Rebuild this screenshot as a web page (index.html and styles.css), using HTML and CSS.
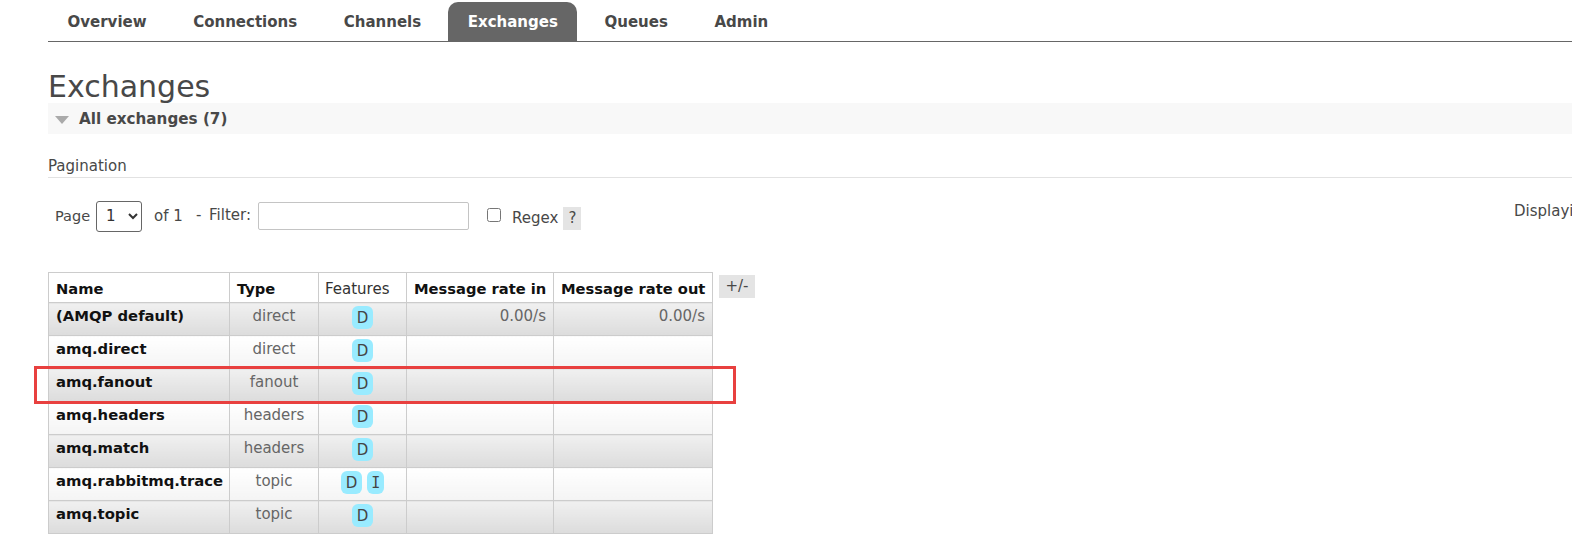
FILE: index.html
```html
<!DOCTYPE html>
<html lang="en">
  <head>
    <meta charset="UTF-8" />
    <title>Exchanges</title>
    <link rel="stylesheet" href="styles.css">
  </head>
  <body>
    <div class="page">
      <ul class="tabs">
        <li><a href="#">Overview</a></li>
        <li><a href="#">Connections</a></li>
        <li><a href="#">Channels</a></li>
        <li><a href="#" class="selected">Exchanges</a></li>
        <li><a href="#">Queues</a></li>
        <li><a href="#">Admin</a></li>
      </ul>

      <h1>Exchanges</h1>

      <div class="section-head">
        <span class="arrow"></span>
        <h2>All exchanges (7)</h2>
      </div>

      <h3 class="pagination-title">Pagination</h3>

      <div class="pagination">
        <label class="page-label">Page</label>
        <select class="page-select">
          <option>1</option>
        </select>
        <span class="of">of 1</span>
        <label class="filter-label">- Filter:</label>
        <input type="text" class="filter" />
        <input type="checkbox" class="regex-check" />
        <label class="regex-label">Regex</label>
        <span class="help">?</span>
        <span class="displaying">Displaying 7 items</span>
      </div>

      <div class="table-wrap">
        <table class="list">
          <thead>
            <tr>
              <th class="c-name">Name</th>
              <th class="c-type">Type</th>
              <th class="c-features plain">Features</th>
              <th class="c-in">Message rate in</th>
              <th class="c-out">Message rate out</th>
            </tr>
          </thead>
          <tbody>
            <tr class="alt1">
              <td class="name">(AMQP default)</td>
              <td class="center">direct</td>
              <td class="center"><span class="tag">D</span></td>
              <td class="rate">0.00/s</td>
              <td class="rate">0.00/s</td>
            </tr>
            <tr class="alt2">
              <td class="name">amq.direct</td>
              <td class="center">direct</td>
              <td class="center"><span class="tag">D</span></td>
              <td></td>
              <td></td>
            </tr>
            <tr class="alt1">
              <td class="name">amq.fanout</td>
              <td class="center">fanout</td>
              <td class="center"><span class="tag">D</span></td>
              <td></td>
              <td></td>
            </tr>
            <tr class="alt2">
              <td class="name">amq.headers</td>
              <td class="center">headers</td>
              <td class="center"><span class="tag">D</span></td>
              <td></td>
              <td></td>
            </tr>
            <tr class="alt1">
              <td class="name">amq.match</td>
              <td class="center">headers</td>
              <td class="center"><span class="tag">D</span></td>
              <td></td>
              <td></td>
            </tr>
            <tr class="alt2">
              <td class="name">amq.rabbitmq.trace</td>
              <td class="center">topic</td>
              <td class="center"><span class="tag">D</span> <span class="tag tag-i">I</span></td>
              <td></td>
              <td></td>
            </tr>
            <tr class="alt1">
              <td class="name">amq.topic</td>
              <td class="center">topic</td>
              <td class="center"><span class="tag">D</span></td>
              <td></td>
              <td></td>
            </tr>
          </tbody>
        </table>
        <span class="plus-minus">+/-</span>
        <div class="highlight"></div>
      </div>
    </div>
  </body>
</html>
```

FILE: styles.css
```css
html,
body {
  margin: 0;
  height: 538px;
  overflow: hidden;
  background: white;
}

body {
  font-family: "DejaVu Sans", Verdana, sans-serif;
  font-size: 15px;
  color: #484848;
}

.page {
  margin-left: 48px;
  width: 1524px;
}

.tabs {
  display: flex;
  gap: 7.6px;
  list-style: none;
  margin: 0;
  padding: 2px 0 0;
  height: 39px;
  border-bottom: 1px solid #666;
}

.tabs a {
  display: block;
  height: 39px;
  line-height: 40px;
  padding: 0 19.5px;
  font-size: 15px;
  font-weight: bold;
  color: #484848;
  text-decoration: none;
  box-sizing: border-box;
}

.tabs a.selected {
  background: #666;
  color: white;
  border-radius: 10px 10px 0 0;
}

h1 {
  margin: 28px 0 0;
  height: 33px;
  line-height: 33px;
  font-size: 30px;
  font-weight: normal;
  color: #484848;
}

.section-head {
  display: flex;
  align-items: center;
  height: 31px;
  background: #f8f8f8;
}

.arrow {
  width: 0;
  height: 0;
  margin: 2px 10px 0 7px;
  border-left: 7px solid transparent;
  border-right: 7px solid transparent;
  border-top: 8px solid #aaa;
}

h2 {
  margin: 0;
  font-size: 15.2px;
  font-weight: bold;
  color: #484848;
}

.pagination-title {
  margin: 22px 0 0;
  height: 21px;
  line-height: 20px;
  font-size: 15px;
  font-weight: normal;
  border-bottom: 1px solid #e2e2e2;
}

.pagination {
  display: flex;
  align-items: center;
  height: 32px;
  margin-top: 22px;
  padding-left: 7px;
}

.page-label {
  font-size: 14.5px;
}

.page-select {
  width: 46px;
  height: 31px;
  margin-left: 6px;
  padding-left: 5px;
  font-family: inherit;
  font-size: 15px;
  color: #333;
  background: white;
  border: 1px solid #666;
  border-radius: 3px;
}

.of {
  margin-left: 12px;
}

.filter-label {
  margin: -2px 0 0 13px;
  word-spacing: 3px;
}

.filter {
  width: 211px;
  height: 28px;
  margin-left: 7px;
  padding: 0;
  box-sizing: border-box;
  border: 1px solid #c4c4c4;
  border-radius: 2px;
}

.regex-check {
  width: 14px;
  height: 14px;
  margin: 0 0 3px 18px;
}

.regex-label {
  margin: 4px 0 0 11px;
}

.help {
  margin: 4px 0 0 5px;
  width: 18px;
  height: 23px;
  line-height: 23px;
  text-align: center;
  background: #e4e4e4;
}

.displaying {
  flex: none;
  width: 58px;
  margin: 0 0 10px auto;
  white-space: nowrap;
  overflow: hidden;
}

.table-wrap {
  position: relative;
  display: flex;
  margin-top: 40px;
}

.list {
  border-collapse: collapse;
  table-layout: fixed;
  width: 664px;
  font-size: 15px;
}

.list th,
.list td {
  border: 1px solid #ccc;
  padding: 0 7px;
  box-sizing: border-box;
  height: 33px;
}

.list th {
  height: 30px;
  padding-top: 2px;
  text-align: left;
  font-size: 14.7px;
  color: #111;
  background: white;
  white-space: nowrap;
}

.list th.plain {
  font-weight: normal;
  font-size: 15px;
  color: #333;
  padding-left: 6px;
}

.c-name { width: 181px; }
.c-type { width: 89px; }
.c-features { width: 88px; }
.c-in { width: 147px; }
.c-out { width: 159px; }

.list td {
  vertical-align: top;
  padding-top: 4px;
  color: #666;
}

.list td.name {
  font-size: 14.8px;
  font-weight: bold;
  color: #111;
}

.list td.center {
  text-align: center;
}

.list td.rate {
  text-align: right;
}

.alt1 td {
  background: linear-gradient(#f0f0f0, #dcdcdc);
}

.alt2 td {
  background: linear-gradient(#fff, #f4f4f4);
}

.tag {
  display: inline-block;
  min-width: 7px;
  height: 23px;
  margin-top: -1px;
  line-height: 24px;
  padding: 0 5px;
  font-size: 15px;
  color: #444;
  background: #99ebff;
  border-radius: 6px;
}

.tag-i {
  font-family: "DejaVu Sans Mono", monospace;
  padding: 0 4px;
}

.plus-minus {
  align-self: flex-start;
  margin: 3px 0 0 6px;
  width: 36px;
  height: 23px;
  line-height: 23px;
  text-align: center;
  background: #e4e4e4;
}

.highlight {
  position: absolute;
  left: -14px;
  top: 94px;
  width: 696px;
  height: 32px;
  border: 3px solid #e8403f;
}
```
